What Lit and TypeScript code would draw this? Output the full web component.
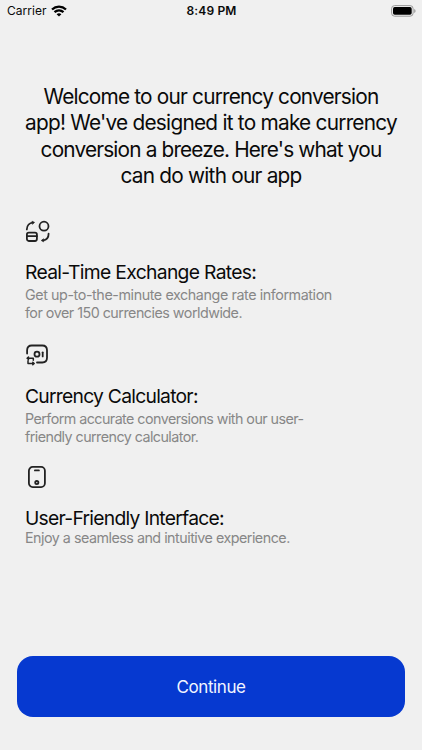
import { LitElement, html, css, svg } from "lit";
import { customElement } from "lit/decorators.js";
import { styleMap } from "lit/directives/style-map.js";

const exchangeIcon = svg`
  <rect x="1.900" y="14.600" width="10" height="8.400" rx="1.900"/>
  <path d="M1.900 18.200h10"/>
  <circle cx="19" cy="8.200" r="4.500"/>
  <path d="M1.800 11.400C1.900 7.500 4.600 4.900 7.800 4.600"/>
  <path d="M7.300 3.300 9.600 4.400 7.700 6.100z" class="solid"/>
  <path d="M23.600 15.700c0 3.900-2.500 6.300-5.600 6.700"/>
  <path d="M18.400 20.900 16.200 22.500 18.400 23.700z" class="solid"/>`;

const calculatorIcon = svg`
  <path d="M2.100 11.600V8.200C2.100 5 3.800 3.500 6.800 3.500h10.500c3 0 4.700 1.500 4.700 4.700v7.600c0 3.200-1.700 4.700-4.700 4.700H12"/>
  <circle cx="12" cy="12.200" r="2.500"/>
  <path d="M17.700 10.300v4.100"/>
  <path d="M8.300 18.300v-2H2.200M3.500 15l-1.400 1.300 1.400 1.200M3 18.800v2.700h6M7.800 20.200l1.400 1.300-1.400 1.200" stroke-width="1.500"/>`;

const phoneIcon = svg`
  <rect x="3.900" y="2.900" width="16" height="20.200" rx="3.800"/>
  <path d="M9.900 6.400h4"/>
  <circle cx="11.800" cy="18.600" r="1.600"/>`;

interface Line {
  text: string;
  tracking: number;
}

const headline: Line[] = [
  { text: "Welcome to our currency conversion", tracking: -0.8 },
  { text: "app! We've designed it to make currency", tracking: -0.75 },
  { text: "conversion a breeze. Here's what you", tracking: -0.83 },
  { text: "can do with our app", tracking: -0.76 },
];

const features = [
  {
    icon: exchangeIcon,
    title: { text: "Real-Time Exchange Rates:", tracking: -0.68 },
    lines: [
      { text: "Get up-to-the-minute exchange rate information", tracking: -0.41 },
      { text: "for over 150 currencies worldwide.", tracking: -0.5 },
    ],
  },
  {
    icon: calculatorIcon,
    title: { text: "Currency Calculator:", tracking: -0.74 },
    lines: [
      { text: "Perform accurate conversions with our user-", tracking: -0.55 },
      { text: "friendly currency calculator.", tracking: -0.55 },
    ],
  },
  {
    icon: phoneIcon,
    title: { text: "User-Friendly Interface:", tracking: -0.74 },
    lines: [{ text: "Enjoy a seamless and intuitive experience.", tracking: -0.5 }],
  },
];

const line = (l: Line) =>
  html`<span class="line" style=${styleMap({ letterSpacing: `${l.tracking}px` })}>${l.text}</span>`;

@customElement("app-root")
export class AppRoot extends LitElement {
  static styles = css`
    :host {
      display: flex;
      flex-direction: column;
      box-sizing: border-box;
      height: 750px;
      background: #f0f0f0;
      color: #0a0a0a;
      font-family: Inter, "Liberation Sans", sans-serif;
      overflow: hidden;
    }
    .status {
      display: grid;
      grid-template-columns: 1fr auto 1fr;
      align-items: center;
      height: 22px;
      padding: 0 6px 0 7px;
      font-size: 12px;
      line-height: 22px;
    }
    .carrier { display: flex; align-items: center; gap: 4px; letter-spacing: 0.05px; }
    .time { font-weight: 600; letter-spacing: 0.15px; }
    .battery { justify-self: end; }
    svg { display: block; }
    h1 {
      margin: 61.800px 0 0;
      text-align: center;
      font-weight: 400;
      font-size: 20.800px;
      line-height: 26.400px;
      white-space: nowrap;
    }
    .line { display: block; }
    .features { display: flex; flex-direction: column; padding: 28.600px 25px 0; }
    .feature { height: 124px; }
    .feature:nth-child(2) { height: 122px; }
    .icon {
      width: 26px;
      height: 26px;
      fill: none;
      stroke: #222;
      stroke-width: 1.800;
      stroke-linecap: round;
      stroke-linejoin: round;
    }
    .solid { fill: #222; stroke-width: 0.6; }
    h2 {
      margin: 16px 0 0;
      font-weight: 400;
      font-size: 19.300px;
      line-height: 24px;
    }
    p {
      margin: 2px 0 0;
      color: #878787;
      font-size: 14.300px;
      line-height: 18px;
      white-space: nowrap;
    }
    .feature:last-child p { margin-top: -1px; }
    button {
      margin: auto 17px 33px;
      height: 61px;
      flex: none;
      border: 0;
      border-radius: 16px;
      background: #0639d0;
      color: #f2f5ff;
      font: 400 17px/61px Inter, "Liberation Sans", sans-serif;
      letter-spacing: -0.400px;
      padding: 1px 0 0;
    }
  `;

  render() {
    return html`
      <div class="status">
        <div class="carrier">
          Carrier
          <svg width="16" height="12" viewBox="0 0 16 12" fill="none" stroke="#000" stroke-width="2.300">
            <path d="M1 4.500C5 .700 11 .700 15 4.500M3.500 7.200c2.600-2.300 6.400-2.300 9 0"/>
            <path d="M8 11.600 5.600 9.200c1.400-1.200 3.400-1.200 4.800 0z" fill="#000" stroke="none"/>
          </svg>
        </div>
        <div class="time">8:49 PM</div>
        <svg class="battery" width="25" height="12" viewBox="0 0 25 12">
          <rect x=".6" y=".6" width="21.500" height="10.600" rx="3" fill="none" stroke="#999"/>
          <rect x="2" y="2" width="18.700" height="7.800" rx="1.700"/>
          <path d="M23.300 4v4c1.600-.7 1.600-3.300 0-4z" fill="#888"/>
        </svg>
      </div>
      <h1>${headline.map(line)}</h1>
      <div class="features">
        ${features.map(
          (f) => html`
            <section class="feature">
              <svg class="icon" viewBox="0 0 26 26">${f.icon}</svg>
              <h2>${line(f.title)}</h2>
              <p>${f.lines.map(line)}</p>
            </section>
          `
        )}
      </div>
      <button>Continue</button>
    `;
  }
}
